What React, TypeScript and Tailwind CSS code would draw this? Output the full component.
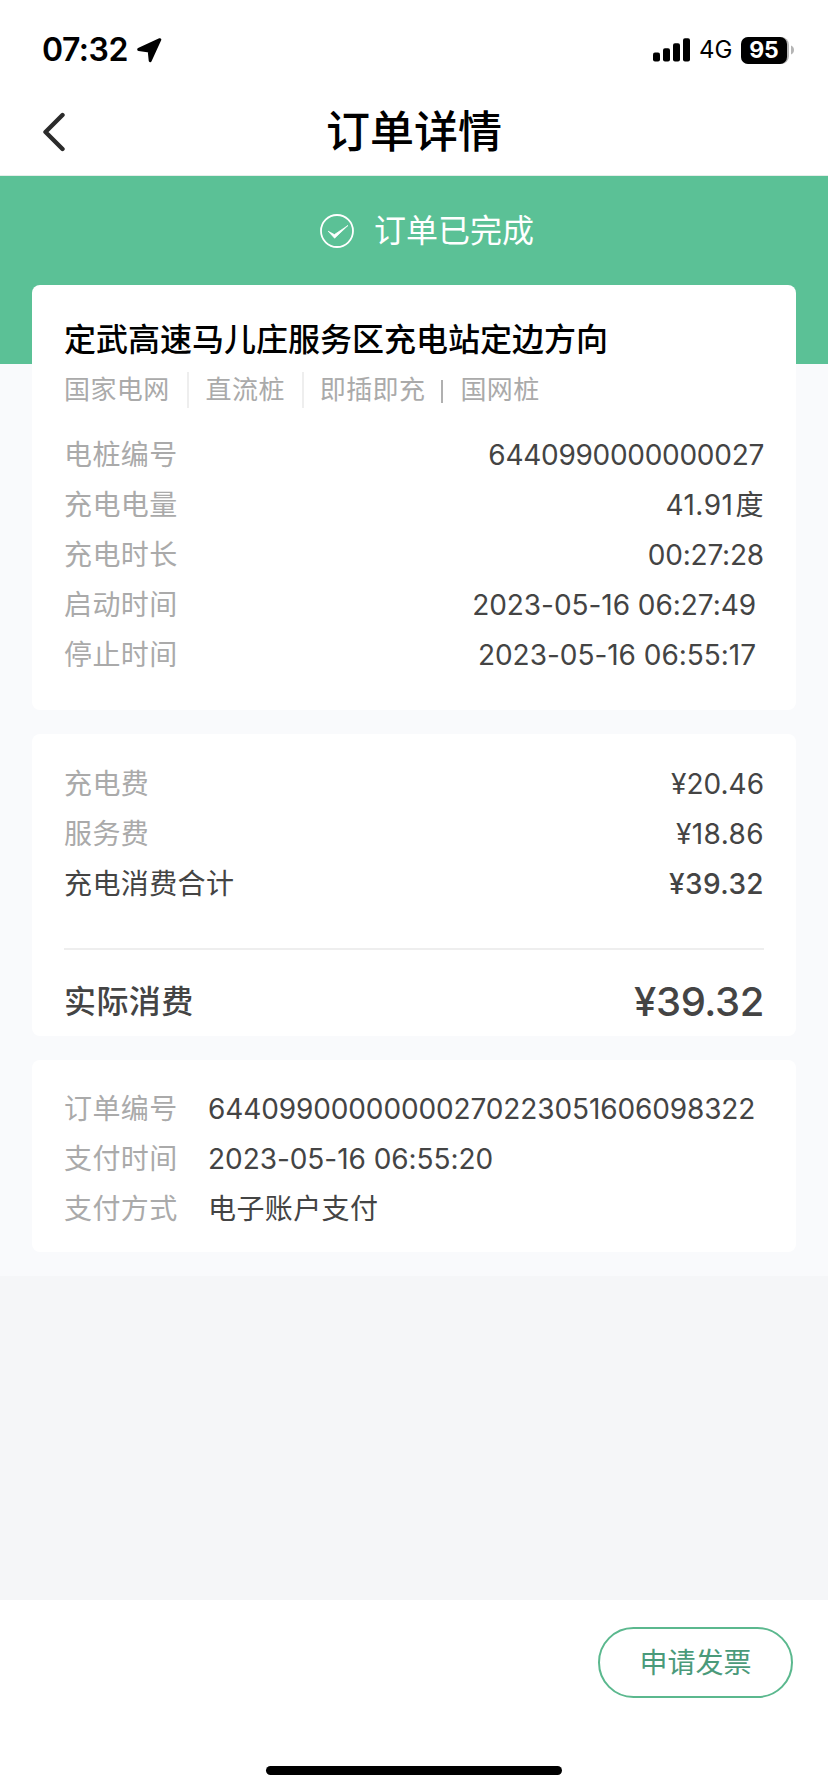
import React from 'react';

type Row = { label: string; value: string; unit?: string; className?: string };

const chargeRows: Row[] = [
  { label: '电桩编号', value: '6440990000000027', className: 'tracking-[-0.28px]' },
  { label: '充电电量', value: '41.91', unit: '度', className: 'tracking-[0.5px]' },
  { label: '充电时长', value: '00:27:28', className: 'tracking-[-0.2px]' },
  { label: '启动时间', value: '2023-05-16 06:27:49', className: 'pr-2 tracking-[-0.05px]' },
  { label: '停止时间', value: '2023-05-16 06:55:17', className: 'pr-2 tracking-[-0.03px]' },
];

const feeRows: Row[] = [
  { label: '充电费', value: '¥20.46', className: 'tracking-[0px]' },
  { label: '服务费', value: '¥18.86' },
];

const paymentRows: Row[] = [
  { label: '订单编号', value: '64409900000000270223051606098322', className: 'tracking-[-0.12px]' },
  { label: '支付时间', value: '2023-05-16 06:55:20', className: 'tracking-[-0.05px]' },
  { label: '支付方式', value: '电子账户支付' },
];

function StatusBar() {
  return (
    <div className="flex h-[100px] items-center justify-between pl-[42px] pr-[34px]">
      <div className="flex items-center">
        <span className="text-[32px] font-semibold leading-none tracking-[-0.5px]">07:32</span>
        <svg className="ml-[9px]" width="25" height="25" viewBox="0 0 25 25" fill="#000">
          <path
            d="M22.8 1.7 L13.2 22.6 L12.2 12.9 L1.7 11.4 Z"
            stroke="#000"
            strokeWidth="3"
            strokeLinejoin="round"
          />
        </svg>
      </div>
      <div className="flex items-center">
        <svg width="37" height="24" viewBox="0 0 37 24" fill="#000">
          <rect x="0" y="14.5" width="7" height="9" rx="2" />
          <rect x="10" y="10.3" width="7" height="13.2" rx="2" />
          <rect x="20" y="5.3" width="7" height="18.2" rx="2" />
          <rect x="30" y="0.3" width="7" height="23.2" rx="2" />
        </svg>
        <span className="ml-[9px] w-[42px] text-[24px] leading-none">4G</span>
        <div className="flex h-[27px] w-[48px] rounded-[8px] bg-[#b5b5b5]">
          <div className="flex h-full w-[46px] items-center justify-center rounded-[7px] bg-black text-[23px] font-bold leading-[27px] text-white">
            95
          </div>
        </div>
        <svg className="ml-[2px]" width="3" height="10" viewBox="0 0 3 10">
          <path d="M0 0.5 C4 2 4 8 0 9.5 Z" fill="#b5b5b5" />
        </svg>
      </div>
    </div>
  );
}

function DetailRow({ label, value, unit, className = '' }: Row) {
  return (
    <div className="flex h-[50px] items-center justify-between">
      <span className="text-[#aaaaaa]">{label}</span>
      <span className={`text-[#444444] ${className}`}>
        {value}
        {unit && <span className="ml-[2px]">{unit}</span>}
      </span>
    </div>
  );
}

export default function App() {
  return (
    <div className="flex h-[1792px] w-[828px] flex-col overflow-hidden bg-[#f5f6f8] font-['Inter','Noto_Sans_CJK_SC',sans-serif] text-black">
      <header className="h-[176px] shrink-0 border-b border-[#e4eee9] bg-white">
        <StatusBar />
        <div className="flex h-[64px] items-center pl-[42px] pr-[42px]">
          <svg width="24" height="40" viewBox="0 0 24 40" fill="none">
            <path d="M20.5 3 L3.5 20 L20.5 37" stroke="#2b2b2b" strokeWidth="4.4" strokeLinecap="round" strokeLinejoin="round" />
          </svg>
          <h1 className="flex-1 pr-6 text-center text-[44px] font-medium leading-[64px]">订单详情</h1>
        </div>
      </header>

      <main className="shrink-0 bg-[#f9fafc] pb-6">
        <div className="h-[188px] bg-[#5bc196]">
          <div className="flex h-[110px] items-center pl-[320px]">
            <svg width="34" height="34" viewBox="0 0 34 34" fill="none">
              <circle cx="17" cy="17" r="16" stroke="#fff" strokeWidth="1.8" />
              <path d="M8.2 17.2 L14.6 24.2 L28 11.4 L14.4 20.6 Z" fill="#fff" stroke="#fff" strokeWidth="0.7" strokeLinejoin="round" />
            </svg>
            <span className="ml-5 text-[32px] leading-[48px] text-white">订单已完成</span>
          </div>
        </div>

        <div className="-mt-[79px] flex flex-col gap-6 px-8 text-[28px] leading-[50px] tracking-[0.4px]">
          <section className="h-[425px] rounded-[8px] bg-white px-8 pt-[30px]">
            <h2 className="text-[32px] font-medium leading-[50px] tracking-normal">定武高速马儿庄服务区充电站定边方向</h2>
            <div className="mt-[7px] flex h-9 items-center text-[26px] leading-9 text-[#aaaaaa]">
              <span>国家电网</span>
              <span className="ml-[17px] h-9 w-[2px] bg-[#eeeeee]" />
              <span className="ml-[17px]">直流桩</span>
              <span className="ml-[17px] h-9 w-[2px] bg-[#eeeeee]" />
              <span className="ml-[16px]">即插即充</span>
              <span className="ml-[16px] mt-[3px] h-[23px] w-[2px] bg-[#b0b0b0]" />
              <span className="ml-[17px]">国网桩</span>
            </div>
            <div className="mt-[22px]">
              {chargeRows.map((row) => (
                <DetailRow key={row.label} {...row} />
              ))}
            </div>
          </section>

          <section className="h-[302px] rounded-[8px] bg-white px-8 pt-[25px]">
            {feeRows.map((row) => (
              <DetailRow key={row.label} {...row} />
            ))}
            <div className="flex h-[50px] items-center justify-between text-[#444444]">
              <span>充电消费合计</span>
              <span className="font-medium">¥39.32</span>
            </div>
            <div className="mt-[39px] h-[2px] bg-[#eeeeee]" />
            <div className="mt-[23px] flex h-[58px] items-center justify-between font-medium text-[#444444]">
              <span className="text-[32px]">实际消费</span>
              <span className="text-[40px] tracking-[-0.4px]">¥39.32</span>
            </div>
          </section>

          <section className="h-[192px] rounded-[8px] bg-white px-8 pt-[24px]">
            {paymentRows.map((row) => (
              <div key={row.label} className="flex h-[50px] items-center">
                <span className="w-[144px] shrink-0 text-[#aaaaaa]">{row.label}</span>
                <span className={`text-[#444444] ${row.className ?? ''}`}>{row.value}</span>
              </div>
            ))}
          </section>
        </div>
      </main>

      <footer className="mt-auto flex h-[192px] shrink-0 flex-col bg-white">
        <div className="flex justify-end pr-[35px] pt-[27px]">
          <button className="h-[71px] w-[195px] rounded-full border-2 border-[#5bb88e] text-[28px] leading-none text-[#4a9a7a]">
            申请发票
          </button>
        </div>
        <div className="mx-auto mb-[17px] mt-auto h-[9px] w-[296px] rounded-full bg-black" />
      </footer>
    </div>
  );
}
